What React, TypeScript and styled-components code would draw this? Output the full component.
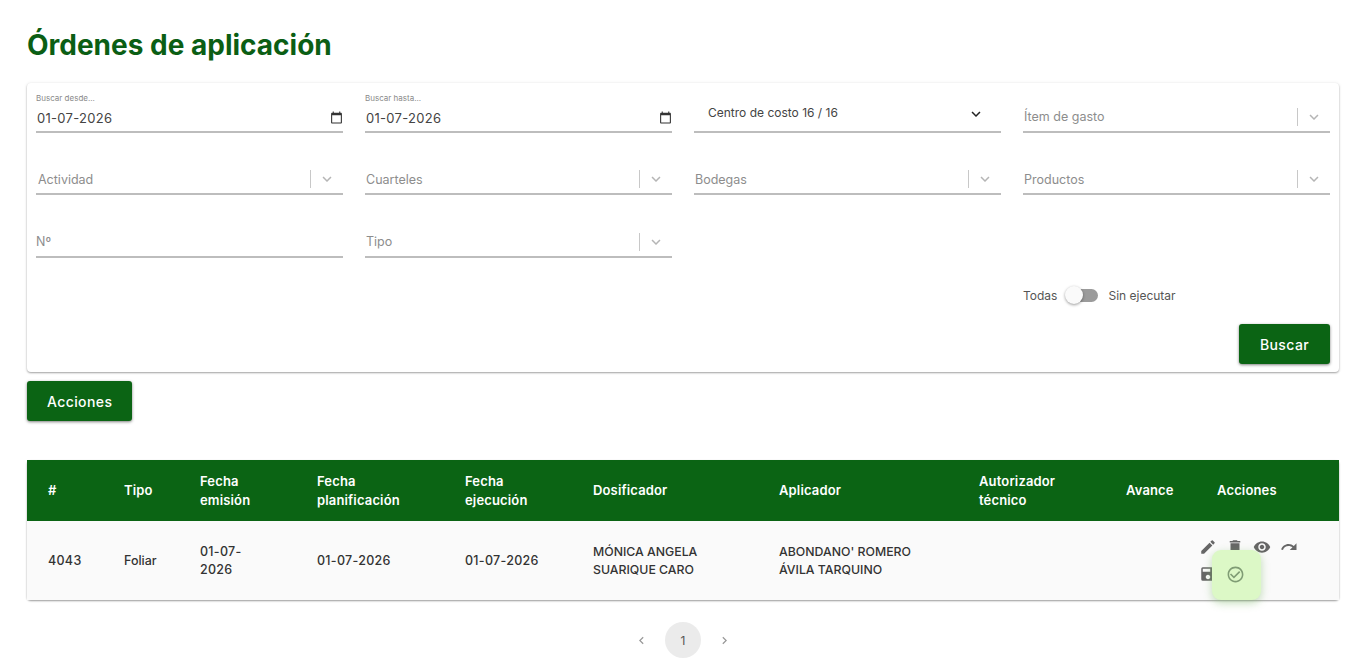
import React from 'react';
import styled, { createGlobalStyle } from 'styled-components';
import { MdEdit, MdDelete, MdVisibility, MdRedo, MdCalendarToday, MdCheckCircleOutline, MdKeyboardArrowDown, MdSave, MdChevronLeft, MdChevronRight } from 'react-icons/md';

const GlobalStyle = createGlobalStyle`
  * { box-sizing: border-box; }
  body {
    margin: 0;
    background: #fff;
    font-family: "Inter", "Open Sans", sans-serif;
    color: #333;
  }
`;

const Page = styled.div`
  padding: 0 27px;
  height: 672px;
  overflow: hidden;
`;

const Title = styled.h1`
  margin: 0;
  padding-top: 29px;
  height: 83px;
  font-size: 28px;
  line-height: 32px;
  font-weight: 700;
  color: #0b5e14;
`;

const Card = styled.section`
  height: 289px;
  padding: 0 9px;
  background: #fff;
  border-radius: 4px;
  box-shadow: 0 1px 2px rgba(0, 0, 0, 0.35), 0 0 4px rgba(0, 0, 0, 0.06);
`;

const FilterGrid = styled.div`
  display: grid;
  grid-template-columns: repeat(4, 307px);
  grid-template-rows: 49.5px 62.5px 62.5px;
  column-gap: 22px;
  height: 175px;
`;

const Field = styled.div`
  position: relative;
  display: flex;
  align-items: flex-end;
  height: 44px;
  border-bottom: 2px solid #bdbdbd;
  align-self: end;
`;

const DateField = styled(Field)`
  flex-direction: column;
  align-items: stretch;
  justify-content: flex-end;
  padding-bottom: 5px;
`;

const SmallLabel = styled.label`
  font-size: 8px;
  line-height: 10px;
  color: #8a8a8a;
`;

const DateRow = styled.div`
  display: flex;
  align-items: center;
  justify-content: space-between;
  margin-top: 7px;
  padding-left: 1px;
  font-size: 13px;
  line-height: 16px;
  letter-spacing: 0.3px;
  color: #444;
`;

const SelectField = styled(Field)`
  align-items: flex-start;
  justify-content: space-between;
  padding: 16px 16px 0 14px;
  font-size: 12px;
  line-height: 16px;
  color: #444;
`;

const Placeholder = styled.div<{ $inset?: number }>`
  display: flex;
  align-items: center;
  width: 100%;
  height: 28px;
  padding-left: ${(p) => p.$inset ?? 2}px;
  font-size: 12.5px;
  color: #8d8d8d;
`;

const PlaceholderText = styled.span`
  flex: 1;
`;

const Separator = styled.span`
  width: 1px;
  height: 18px;
  background: #c8c8c8;
`;

const ChevronSlot = styled.span`
  display: flex;
  justify-content: center;
  width: 32px;
  color: #b5b5b5;
`;

const SwitchRow = styled.div`
  display: flex;
  align-items: center;
  height: 36px;
  margin-top: 19px;
  padding-left: 987px;
  font-size: 12px;
  color: #555;
`;

const SwitchTrack = styled.span`
  position: relative;
  width: 26px;
  height: 13px;
  margin: 0 10px 0 15px;
  border-radius: 7px;
  background: #9b9b9b;
`;

const SwitchThumb = styled.span`
  position: absolute;
  top: -3px;
  left: -7px;
  width: 18px;
  height: 18px;
  border-radius: 50%;
  background: #fafafa;
  box-shadow: 0 1px 3px rgba(0, 0, 0, 0.4);
`;

const ButtonRow = styled.div`
  display: flex;
  justify-content: flex-end;
  margin-top: 11px;
`;

const Button = styled.button`
  height: 40px;
  min-width: 91px;
  padding: 0 20px;
  border: 0;
  border-radius: 3px;
  background: #0b6414;
  color: #fff;
  font-family: inherit;
  font-size: 14px;
  font-weight: 500;
  letter-spacing: 0.4px;
  box-shadow: 0 1px 3px rgba(0, 0, 0, 0.5);
`;

const ActionsBar = styled.div`
  height: 88px;
  padding-top: 9px;
`;

const TablePanel = styled.div`
  position: relative;
  border-radius: 4px;
  box-shadow: 0 1px 2px rgba(0, 0, 0, 0.4);
`;

const Table = styled.table`
  width: 1312px;
  table-layout: fixed;
  border-collapse: collapse;
`;

const Col = styled.col<{ $w: number }>`
  width: ${(p) => p.$w}px;
`;

const HeadCell = styled.th`
  height: 61px;
  padding: 0 0 0 21px;
  background: #0b6414;
  color: #fff;
  text-align: left;
  font-size: 13px;
  line-height: 19px;
  font-weight: 600;
  letter-spacing: 0.15px;
`;

const Cell = styled.td`
  height: 79px;
  padding: 0 0 0 21px;
  background: #fafafa;
  font-size: 12.5px;
  line-height: 18px;
  font-weight: 500;
  color: #333;
`;

const DateCell = styled(Cell)`
  letter-spacing: 0.3px;
`;

const NameCell = styled(Cell)`
  font-size: 12.3px;
`;

const IconGrid = styled.div`
  display: flex;
  flex-wrap: wrap;
  width: 110px;
  margin-left: -18px;
  gap: 9px 9px;
  font-size: 18px;
  color: #666;
`;

const Highlight = styled.div`
  position: absolute;
  left: 1185px;
  top: 90px;
  display: flex;
  align-items: center;
  justify-content: center;
  width: 49px;
  height: 50px;
  padding: 0 2px 2px 0;
  border-radius: 9px;
  background: #dcf8c6;
  color: #7f9c74;
  font-size: 19px;
  box-shadow: 0 3px 8px rgba(120, 180, 100, 0.45);
`;

const Pagination = styled.nav`
  display: flex;
  align-items: center;
  justify-content: center;
  gap: 8px;
  margin-top: 22px;
  color: #999;
  font-size: 15px;
`;

const PageNumber = styled.span`
  display: flex;
  align-items: center;
  justify-content: center;
  width: 36px;
  height: 36px;
  margin: 0 8px;
  border-radius: 50%;
  background: #ebebeb;
  color: #555;
  font-size: 12px;
`;

const columns = [76, 76, 117, 148, 128, 186, 200, 147, 91, 143];

function DateInput({ label }: { label: string }) {
  return (
    <DateField>
      <SmallLabel>{label}</SmallLabel>
      <DateRow>
        <span>01-07-2026</span>
        <MdCalendarToday size={13} color="#333" />
      </DateRow>
    </DateField>
  );
}

function ComboBox({ label, inset }: { label: string; inset?: number }) {
  return (
    <Field>
      <Placeholder $inset={inset}>
        <PlaceholderText>{label}</PlaceholderText>
        <Separator />
        <ChevronSlot>
          <MdKeyboardArrowDown size={18} />
        </ChevronSlot>
      </Placeholder>
    </Field>
  );
}

export default function App() {
  return (
    <>
      <GlobalStyle />
      <Page>
        <Title>Órdenes de aplicación</Title>
        <Card>
          <FilterGrid>
            <DateInput label="Buscar desde..." />
            <DateInput label="Buscar hasta..." />
            <SelectField>
              <span>Centro de costo 16 / 16</span>
              <MdKeyboardArrowDown size={18} color="#222" />
            </SelectField>
            <ComboBox label="Ítem de gasto" inset={1} />
            <ComboBox label="Actividad" />
            <ComboBox label="Cuarteles" inset={1} />
            <ComboBox label="Bodegas" inset={1} />
            <ComboBox label="Productos" inset={1} />
            <Field>
              <Placeholder $inset={0}>Nº</Placeholder>
            </Field>
            <ComboBox label="Tipo" inset={1} />
          </FilterGrid>
          <SwitchRow>
            <span>Todas</span>
            <SwitchTrack>
              <SwitchThumb />
            </SwitchTrack>
            <span>Sin ejecutar</span>
          </SwitchRow>
          <ButtonRow>
            <Button>Buscar</Button>
          </ButtonRow>
        </Card>
        <ActionsBar>
          <Button>Acciones</Button>
        </ActionsBar>
        <TablePanel>
          <Table>
            <colgroup>
              {columns.map((w, i) => (
                <Col key={i} $w={w} />
              ))}
            </colgroup>
            <thead>
              <tr>
                <HeadCell>#</HeadCell>
                <HeadCell>Tipo</HeadCell>
                <HeadCell>Fecha<br />emisión</HeadCell>
                <HeadCell>Fecha<br />planificación</HeadCell>
                <HeadCell>Fecha<br />ejecución</HeadCell>
                <HeadCell>Dosificador</HeadCell>
                <HeadCell>Aplicador</HeadCell>
                <HeadCell>Autorizador<br />técnico</HeadCell>
                <HeadCell>Avance</HeadCell>
                <HeadCell>Acciones</HeadCell>
              </tr>
            </thead>
            <tbody>
              <tr>
                <DateCell>4043</DateCell>
                <Cell>Foliar</Cell>
                <DateCell>01-07-<br />2026</DateCell>
                <DateCell>01-07-2026</DateCell>
                <DateCell>01-07-2026</DateCell>
                <NameCell>MÓNICA ANGELA<br />SUARIQUE CARO</NameCell>
                <NameCell>ABONDANO' ROMERO<br />ÁVILA TARQUINO</NameCell>
                <Cell />
                <Cell />
                <Cell>
                  <IconGrid>
                    <MdEdit />
                    <MdDelete />
                    <MdVisibility />
                    <MdRedo />
                    <MdSave />
                  </IconGrid>
                </Cell>
              </tr>
            </tbody>
          </Table>
          <Highlight>
            <MdCheckCircleOutline />
          </Highlight>
        </TablePanel>
        <Pagination>
          <MdChevronLeft />
          <PageNumber>1</PageNumber>
          <MdChevronRight />
        </Pagination>
      </Page>
    </>
  );
}
